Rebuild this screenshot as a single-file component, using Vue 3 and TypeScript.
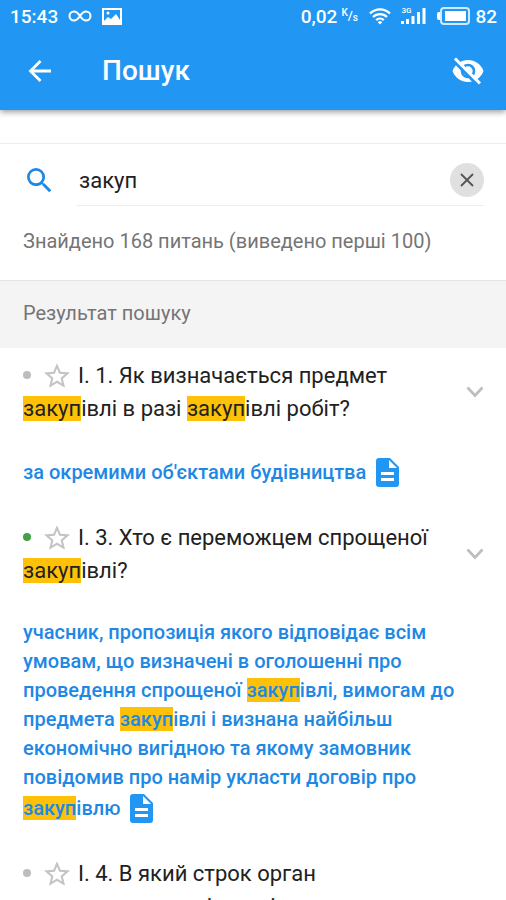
<script setup lang="ts">
import { ref } from 'vue'

interface Part {
  text: string
  hit: boolean
}

interface Question {
  id: string
  title: string
  answer: string
  learned: boolean
}

const query = ref('закуп')
const mark = 'закуп'

const questions: Question[] = [
  {
    id: 'q1',
    title: 'І. 1. Як визначається предмет закупівлі в разі закупівлі робіт?',
    answer: "за окремими об'єктами будівництва",
    learned: false,
  },
  {
    id: 'q3',
    title: 'І. 3. Хто є переможцем спрощеної закупівлі?',
    answer:
      'учасник, пропозиція якого відповідає всім умовам, що визначені в оголошенні про проведення спрощеної закупівлі, вимогам до предмета закупівлі і визнана найбільш економічно вигідною та якому замовник повідомив про намір укласти договір про закупівлю',
    learned: true,
  },
  {
    id: 'q4',
    title: 'І. 4. В який строк орган оскарження розміщує рішення в електронній системі закупівель?',
    answer: '',
    learned: false,
  },
]

function split(text: string): Part[] {
  return text
    .split(new RegExp(`(${mark})`))
    .filter((t) => t !== '')
    .map((t) => ({ text: t, hit: t === mark }))
}
</script>

<template>
  <div class="screen">
    <header class="top">
      <div class="status">
        <span class="clock">15:43</span>
        <svg class="loop" viewBox="0 0 24 12" aria-hidden="true">
          <path d="M12 6C10 3 8.500 1.500 6 1.500a4.500 4.500 0 0 0 0 9C8.500 10.500 10 9 12 6s3.500-4.500 6-4.500a4.500 4.500 0 0 1 0 9C15.500 10.500 14 9 12 6z" fill="none" stroke="currentColor" stroke-width="2" />
        </svg>
        <svg class="photo" viewBox="0 0 20 17" aria-hidden="true">
          <path d="M1 1h18v15H1z" fill="none" stroke="currentColor" stroke-width="2" />
          <path d="M2 15v-2l4-4 3 2 5-5 4 6v3z" fill="currentColor" />
          <circle cx="6" cy="5" r="1.500" fill="currentColor" />
        </svg>
        <span class="speed">0,02</span>
        <span class="unit"><sup>K</sup>/<sub>s</sub></span>
        <svg class="wifi" viewBox="0 0 22 18" aria-hidden="true">
          <g fill="none" stroke="currentColor" stroke-width="2.300">
            <path d="M1 6.500a14 14 0 0 1 20 0" />
            <path d="M4 10a10 10 0 0 1 14 0" />
            <path d="M7.200 13.200a5.500 5.500 0 0 1 7.600 0" />
          </g>
          <path d="M8.800 15.200a3 3 0 0 1 4.400 0L11 17.600z" fill="currentColor" />
        </svg>
        <span class="cell">
          <svg viewBox="0 0 28 18" aria-hidden="true">
            <path d="M1 14h3v3H1zM6 12h3v5H6zM11.500 9h3v8h-3zM17 5h3v12h-3zM22.500 1h3v16h-3z" fill="currentColor" />
          </svg>
          <span class="net">3G</span>
        </span>
        <svg class="battery" viewBox="0 0 33 18" aria-hidden="true">
          <rect x="4" y="1" width="28" height="16" rx="3" fill="none" stroke="currentColor" stroke-opacity="0.8" stroke-width="2" />
          <rect x="8" y="4" width="21" height="10" fill="currentColor" />
          <path d="M3 5v8H2a2 2 0 0 1-2-2V7a2 2 0 0 1 2-2z" fill="currentColor" />
        </svg>
        <span class="charge">82</span>
      </div>
      <div class="bar">
        <button class="icon-btn" type="button" aria-label="Назад">
          <svg class="arrow" viewBox="0 0 24 24" aria-hidden="true">
            <path d="M12.500 2 2.500 12l10 10M2.500 12H23" fill="none" stroke="currentColor" stroke-width="2.800" />
          </svg>
        </button>
        <h1>Пошук</h1>
        <button class="icon-btn" type="button" aria-label="Приховати відповіді">
          <svg class="eye" viewBox="0 0 32 28" aria-hidden="true">
            <path d="M16 3C9 3 3 7.300.500 14 3 20.700 9 25 16 25s13-4.300 15.500-11C29 7.300 23 3 16 3z" fill="currentColor" />
            <circle cx="16" cy="14" r="6" fill="none" stroke="#2196f3" stroke-width="2.600" />
            <path d="M1 3.500 26.500 29" stroke="#2196f3" stroke-width="3" />
            <path d="M3 1.500 28 26.500" stroke="currentColor" stroke-width="3" />
          </svg>
        </button>
      </div>
    </header>

    <main>
      <form class="search" @submit.prevent>
        <svg class="lens" viewBox="3 3 18 18" aria-hidden="true">
          <path fill="currentColor" d="M15.500 14h-.79l-.28-.27A6.471 6.471 0 0 0 16 9.500 6.500 6.500 0 1 0 9.500 16c1.610 0 3.090-.59 4.230-1.570l.27.28v.79l5 4.990L20.490 19l-4.990-5zm-6 0C7.010 14 5 11.990 5 9.500S7.010 5 9.500 5 14 7.010 14 9.500 11.990 14 9.500 14z" />
        </svg>
        <div class="field">
          <input v-model="query" type="text" aria-label="Пошук" />
          <button class="clear" type="button" aria-label="Очистити" @click="query = ''">
            <svg viewBox="0 0 14 14" aria-hidden="true">
              <path d="m1 1 12 12M13 1 1 13" stroke="currentColor" stroke-width="1.800" />
            </svg>
          </button>
        </div>
      </form>
      <p class="found">Знайдено 168 питань (виведено перші 100)</p>
      <h2>Результат пошуку</h2>

      <article v-for="q in questions" :key="q.id" class="item">
        <div class="question">
          <p class="title">
            <span class="dot" :class="{ learned: q.learned }"></span>
            <svg class="star" viewBox="2 2 20 19" aria-hidden="true">
              <path fill="currentColor" d="m22 9.240-7.190-.62L12 2 9.190 8.630 2 9.240l5.460 4.730L5.820 21 12 17.270 18.180 21l-1.630-7.030L22 9.240zM12 15.400l-3.760 2.270 1-4.280-3.320-2.880 4.380-.38L12 6.100l1.710 4.040 4.380.38-3.320 2.880 1 4.280L12 15.400z" />
            </svg>
            <template v-for="(p, i) in split(q.title)" :key="i"><mark v-if="p.hit">{{ p.text }}</mark><template v-else>{{ p.text }}</template></template>
          </p>
          <button class="expand" type="button" aria-label="Розгорнути">
            <svg viewBox="0 0 18 12" aria-hidden="true">
              <path d="m1.500 1.500 7.500 8 7.500-8" fill="none" stroke="currentColor" stroke-width="2.600" />
            </svg>
          </button>
        </div>
        <p v-if="q.answer" class="answer">
          <template v-for="(p, i) in split(q.answer)" :key="i"><mark v-if="p.hit">{{ p.text }}</mark><template v-else>{{ p.text }}</template></template>
          <svg class="doc" viewBox="0 0 23 29" aria-hidden="true">
            <path fill="currentColor" fill-rule="evenodd" d="M3 0h11l9 9v17a3 3 0 0 1-3 3H3a3 3 0 0 1-3-3V3a3 3 0 0 1 3-3zm10 2v8h8zM5 14v3h13v-3zm0 6v3h13v-3z" />
          </svg>
        </p>
      </article>
    </main>
  </div>
</template>

<style>
html,
body {
  background: #fff;
}
body {
  overflow: hidden;
}
</style>

<style scoped>
.screen {
  height: 100vh;
  overflow: hidden;
  font-family: Roboto, 'Noto Sans', sans-serif;
  color: #212121;
  background: #fff;
}
p,
h1,
h2 {
  margin: 0;
}
button {
  padding: 0;
  border: 0;
  background: none;
  color: inherit;
  display: flex;
  align-items: center;
  justify-content: center;
}
.top {
  background: #2196f3;
  color: #fff;
  box-shadow: 0 2px 6px rgba(0, 0, 0, 0.4);
}
.status {
  display: flex;
  align-items: center;
  height: 32px;
  padding: 0 9px 0 10px;
  font-size: 19px;
  font-weight: 500;
}
.loop {
  width: 24px;
  height: 12px;
  margin-left: 10px;
}
.photo {
  width: 20px;
  height: 17px;
  margin-left: 10px;
}
.speed {
  margin-left: auto;
}
.unit {
  width: 18px;
  margin-left: 4px;
  font-size: 13px;
  line-height: 16px;
  white-space: nowrap;
}
.unit sup,
.unit sub {
  font-size: 10px;
  line-height: 8px;
}
.unit sub {
  vertical-align: -1px;
}
.unit sup {
  vertical-align: 4px;
}
.wifi {
  width: 22px;
  height: 18px;
  margin-left: 10px;
}
.cell {
  position: relative;
  display: flex;
  margin-left: 9px;
}
.cell svg {
  width: 28px;
  height: 18px;
}
.net {
  position: absolute;
  top: 0;
  left: 1px;
  font-size: 8px;
  line-height: 8px;
}
.battery {
  width: 33px;
  height: 18px;
  margin-left: 9px;
}
.charge {
  margin-left: 5px;
}
.bar {
  display: flex;
  align-items: center;
  height: 78px;
  padding: 0 22px 0 28px;
}
.icon-btn {
  flex: none;
}
.arrow {
  width: 24px;
  height: 24px;
}
.eye {
  width: 32px;
  height: 28px;
}
h1 {
  flex: 1;
  margin-left: 50px;
  font-size: 28px;
  line-height: 32px;
  font-weight: 500;
}
main {
  margin-top: 33px;
  border-top: 1px solid #ececec;
}
.search {
  display: flex;
  align-items: center;
  gap: 25px;
  padding: 11px 22px 0 27px;
}
.lens {
  flex: none;
  width: 25px;
  height: 25px;
  color: #1e88e5;
}
.field {
  flex: 1;
  min-width: 0;
  display: flex;
  align-items: center;
  height: 50px;
  border-bottom: 1px solid #ececec;
}
.field input {
  flex: 1;
  min-width: 0;
  padding: 0 0 0 2px;
  border: 0;
  outline: 0;
  background: none;
  color: #212121;
  font-family: inherit;
  font-size: 22px;
}
.clear {
  flex: none;
  width: 34px;
  height: 34px;
  border-radius: 50%;
  background: #e0e0e0;
  color: #555;
}
.clear svg {
  width: 14px;
  height: 14px;
}
.found {
  padding: 22px 23px 26px;
  font-size: 20px;
  line-height: 26px;
  color: #757575;
}
h2 {
  padding: 0 23px 3px;
  border-top: 1px solid #e4e4e4;
  background: #f4f4f4;
  font-size: 20px;
  line-height: 64px;
  font-weight: 400;
  color: #757575;
}
.item {
  padding: 11px 22px 0 23px;
}
.question {
  display: flex;
  align-items: center;
}
.title {
  flex: 1;
  font-size: 22px;
  line-height: 33px;
}
.dot {
  display: inline-block;
  width: 8px;
  height: 8px;
  margin-right: 13px;
  border-radius: 50%;
  background: #bdbdbd;
  vertical-align: 4px;
}
.dot.learned {
  background: #43a047;
}
.star {
  width: 26px;
  height: 25px;
  margin-right: 8px;
  color: #c4c4c4;
  vertical-align: -5px;
}
mark {
  background: #ffc107;
  color: inherit;
}
.expand {
  flex: none;
  width: 18px;
  margin-left: 20px;
  color: #bdbdbd;
}
.expand svg {
  width: 18px;
  height: 12px;
}
.answer {
  padding: 31px 10px 21px 0;
  font-size: 20px;
  line-height: 29px;
  font-weight: 500;
  color: #1e88e5;
}
.doc {
  width: 23px;
  height: 29px;
  margin: 2px 0 2px 10px;
  vertical-align: -10px;
  color: #2196f3;
}
</style>
